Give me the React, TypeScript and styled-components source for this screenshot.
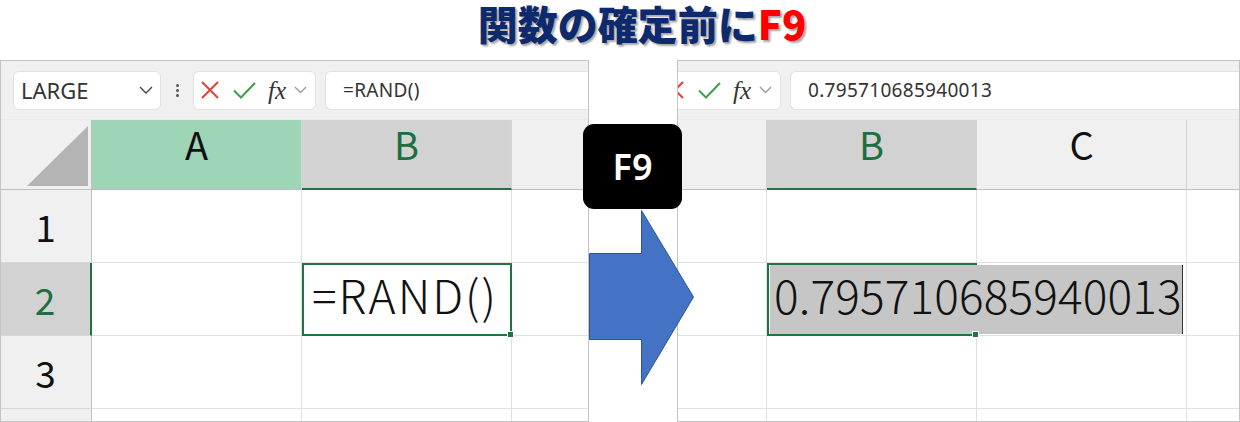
import { Fragment } from "react";
import styled, { createGlobalStyle } from "styled-components";

const GlobalStyle = createGlobalStyle`
  html, body {
    margin: 0;
    padding: 0;
    background: #ffffff;
  }
  body {
    font-family: "Noto Sans", "Liberation Sans", sans-serif;
  }
`;

const GREEN = "#217346";

const Page = styled.div`
  width: 1240px;
  height: 422px;
  overflow: hidden;
  display: flex;
  flex-direction: column;
`;

const Title = styled.h1`
  margin: 0;
  height: 60px;
  padding-left: 44px;
  box-sizing: border-box;
  text-align: center;
  font-family: "Noto Sans CJK JP", sans-serif;
  font-weight: 900;
  font-size: 40px;
  line-height: 46px;
  color: #0e2a6e;
  text-shadow: 2px 2px 2px rgba(0, 0, 0, 0.35);
`;

const TitleKey = styled.span`
  color: #ff0000;
`;

const Stage = styled.div`
  position: relative;
  display: flex;
  gap: 88px;
  height: 362px;
`;

const Panel = styled.div<{ $width: number }>`
  width: ${(p) => p.$width}px;
  height: 362px;
  flex-shrink: 0;
  box-sizing: border-box;
  border: 1px solid #c4c4c4;
  overflow: hidden;
  background: #ffffff;
`;

const Sheet = styled.div<{ $scroll: number }>`
  width: 1000px;
  margin-left: ${(p) => -p.$scroll}px;
`;

/* ---------- formula bar ---------- */

const FormulaBar = styled.div`
  height: 59px;
  box-sizing: border-box;
  display: flex;
  align-items: center;
  padding-left: 13px;
  background: #f0f0f0;
  border-bottom: 1px solid #e8eaec;
`;

const Box = styled.div`
  height: 39px;
  box-sizing: border-box;
  background: #ffffff;
  border: 1px solid #e2e2e2;
  border-radius: 6px;
  display: flex;
  align-items: center;
`;

const NameBox = styled(Box)`
  width: 148px;
  justify-content: space-between;
  padding: 0 7px 0 7px;
  font-size: 22px;
  color: #333333;
`;

const Dots = styled.div`
  width: 32px;
  display: flex;
  flex-direction: column;
  align-items: center;
  gap: 2px;

  span {
    width: 3px;
    height: 3px;
    border-radius: 50%;
    background: #555555;
  }
`;

const ButtonGroup = styled(Box)`
  width: 123px;
  padding-left: 7px;
`;

const Slot = styled.span<{ $gap?: number }>`
  display: flex;
  align-items: center;
  margin-left: ${(p) => p.$gap ?? 0}px;
`;

const Fx = styled.span`
  font-family: "Liberation Serif", serif;
  font-style: italic;
  font-size: 25px;
  color: #333333;
  line-height: 1;
`;

const FormulaBox = styled(Box)`
  flex: 1;
  margin-left: 9px;
  padding-left: 17px;
  font-size: 19px;
  color: #333333;
  border-right: none;
  border-radius: 6px 0 0 6px;
  letter-spacing: 0.3px;
`;

/* ---------- grid ---------- */

const Grid = styled.div`
  display: grid;
  grid-template-columns: 92px repeat(5, 210px);
  grid-template-rows: 70px repeat(3, 73px) 30px;
`;

const Cell = styled.div<{ $active?: boolean }>`
  position: relative;
  box-sizing: border-box;
  border-right: 1px solid #e1e1e1;
  border-bottom: 1px solid #e1e1e1;
  background: #ffffff;
  display: flex;
  align-items: center;
  ${(p) =>
    p.$active &&
    `
    z-index: 1;
    border: 2px solid ${GREEN};
  `}
`;

const ColHeader = styled.div<{ $tone?: "plain" | "selected" | "highlight" }>`
  box-sizing: border-box;
  display: flex;
  justify-content: center;
  padding-top: 2px;
  font-family: "Noto Sans CJK JP", sans-serif;
  font-size: 38px;
  line-height: 44px;
  color: ${(p) => (p.$tone === "selected" ? "#1e6e42" : "#111111")};
  background: ${(p) =>
    p.$tone === "selected"
      ? "#d2d2d2"
      : p.$tone === "highlight"
      ? "#9fd5b7"
      : "#f0f0f0"};
  border-right: 1px solid #d4d4d4;
  border-bottom: ${(p) =>
    p.$tone === "selected" ? `2px solid ${GREEN}` : "1px solid #bfbfbf"};
`;

const Corner = styled.div`
  box-sizing: border-box;
  background: #f0f0f0;
  border-right: 1px solid #bfbfbf;
  border-bottom: 1px solid #bfbfbf;
  display: flex;
  align-items: flex-end;
  justify-content: flex-end;
  padding: 0 3px 3px 0;
`;

const CornerTriangle = styled.div`
  width: 61px;
  height: 60px;
  background: #b4b4b4;
  clip-path: polygon(100% 0, 100% 100%, 0 100%);
`;

const RowHeader = styled.div<{ $selected?: boolean }>`
  box-sizing: border-box;
  display: flex;
  align-items: center;
  justify-content: center;
  font-family: "Noto Sans CJK JP", sans-serif;
  font-size: 37px;
  color: ${(p) => (p.$selected ? "#1e6e42" : "#111111")};
  background: ${(p) => (p.$selected ? "#d2d2d2" : "#f0f0f0")};
  border-right: ${(p) =>
    p.$selected ? `2px solid ${GREEN}` : "1px solid #bfbfbf"};
  border-bottom: 1px solid #d6d6d6;
`;

const CellText = styled.span`
  padding: 0 0 12px 8px;
  font-family: "Noto Sans CJK JP", sans-serif;
  font-weight: 300;
  font-size: 46px;
  letter-spacing: 2px;
  color: #111111;
  white-space: nowrap;
`;

const EditText = styled.span`
  align-self: stretch;
  display: flex;
  align-items: center;
  margin-left: 1px;
  padding: 0 0 12px 4px;
  background: #c6c6c6;
  border-right: 1px solid #333333;
  font-family: "Noto Sans CJK JP", sans-serif;
  font-weight: 300;
  font-size: 46px;
  letter-spacing: 0.15px;
  color: #111111;
  white-space: nowrap;
`;

const FillHandle = styled.span`
  position: absolute;
  right: -4px;
  bottom: -4px;
  width: 5px;
  height: 5px;
  background: ${GREEN};
  border: 1px solid #ffffff;
`;

/* ---------- overlay ---------- */

const KeyCap = styled.div`
  position: absolute;
  left: 583px;
  top: 64px;
  width: 99px;
  height: 85px;
  border-radius: 11px;
  background: #000000;
  color: #ffffff;
  display: flex;
  align-items: center;
  justify-content: center;
  font-family: "Noto Sans", sans-serif;
  font-weight: 600;
  font-size: 36px;
  z-index: 3;
`;

const Arrow = styled.svg`
  position: absolute;
  left: 589px;
  top: 150px;
  z-index: 2;
`;

const Chevron = ({ color, w }: { color: string; w: number }) => (
  <svg width={w} height={w / 2 + 1} viewBox="0 0 14 8">
    <path d="M1 1L7 7L13 1" fill="none" stroke={color} strokeWidth="1.4" />
  </svg>
);

const columns = ["A", "B", "C", "D", "E"];

interface SheetViewProps {
  scroll: number;
  formula: string;
  highlightA: boolean;
  cellB2: React.ReactNode;
}

function SheetView({ scroll, formula, highlightA, cellB2 }: SheetViewProps) {
  return (
    <Sheet $scroll={scroll}>
      <FormulaBar>
        <NameBox>
          LARGE
          <Chevron color="#444444" w={14} />
        </NameBox>
        <Dots>
          <span />
          <span />
          <span />
        </Dots>
        <ButtonGroup>
          <Slot>
            <svg width="18" height="18" viewBox="0 0 18 18">
              <path d="M1 1L17 17M17 1L1 17" stroke="#e5403a" strokeWidth="2" />
            </svg>
          </Slot>
          <Slot $gap={14}>
            <svg width="23" height="17" viewBox="0 0 23 17">
              <path d="M1 8.5L8 15.5L22 1" fill="none" stroke="#3e9e4e" strokeWidth="2" />
            </svg>
          </Slot>
          <Slot $gap={12}>
            <Fx>fx</Fx>
          </Slot>
          <Slot $gap={8}>
            <Chevron color="#9a9a9a" w={13} />
          </Slot>
        </ButtonGroup>
        <FormulaBox>{formula}</FormulaBox>
      </FormulaBar>
      <Grid>
        <Corner>
          <CornerTriangle />
        </Corner>
        {columns.map((c) => (
          <ColHeader
            key={c}
            $tone={c === "B" ? "selected" : c === "A" && highlightA ? "highlight" : "plain"}
          >
            {c}
          </ColHeader>
        ))}
        {[1, 2, 3, 4].map((r) => (
          <Fragment key={r}>
            <RowHeader $selected={r === 2}>{r < 4 ? r : ""}</RowHeader>
            {columns.map((c) =>
              r === 2 && c === "B" ? (
                <Cell key={c} $active>
                  {cellB2}
                  <FillHandle />
                </Cell>
              ) : (
                <Cell key={c} />
              )
            )}
          </Fragment>
        ))}
      </Grid>
    </Sheet>
  );
}

export default function App() {
  return (
    <Page>
      <GlobalStyle />
      <Title>
        関数の確定前に<TitleKey>F9</TitleKey>
      </Title>
      <Stage>
        <Panel $width={589}>
          <SheetView
            scroll={1}
            formula="=RAND()"
            highlightA
            cellB2={<CellText>=RAND()</CellText>}
          />
        </Panel>
        <Panel $width={563}>
          <SheetView
            scroll={213}
            formula="0.795710685940013"
            highlightA={false}
            cellB2={<EditText>0.795710685940013</EditText>}
          />
        </Panel>
        <KeyCap>F9</KeyCap>
        <Arrow width="106" height="176" viewBox="0 0 106 176">
          <polygon
            points="0.5,43.5 52.5,43.5 52.5,0.5 104.5,87 52.5,174.5 52.5,129.5 0.5,129.5"
            fill="#4472c4"
            stroke="#2f5597"
            strokeWidth="1"
          />
        </Arrow>
      </Stage>
    </Page>
  );
}
